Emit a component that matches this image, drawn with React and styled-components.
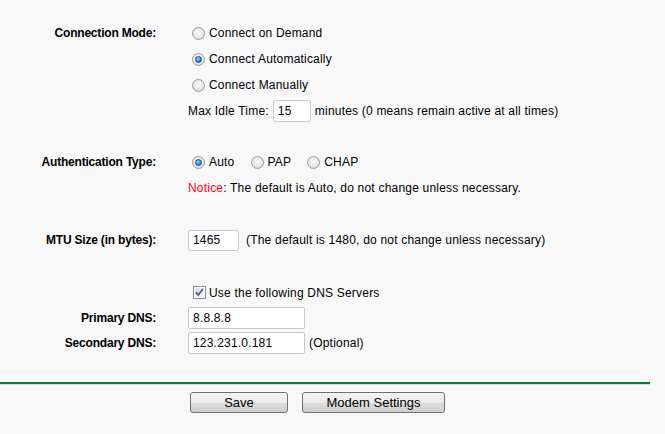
import React from 'react';
import styled, { createGlobalStyle } from 'styled-components';

const Global = createGlobalStyle`
  body {
    margin: 0;
    background: #f8f8f8;
    font-family: "Liberation Sans", Arial, sans-serif;
    font-size: 12px;
    color: #000;
  }
`;

const Page = styled.div`
  width: 650px;
  padding-top: 20px;
`;

const Section = styled.div`
  display: flex;
  flex-direction: column;
  margin-top: ${({ $space }) => $space || 0}px;
`;

const Row = styled.div`
  display: grid;
  grid-template-columns: 156px 1fr;
  column-gap: 32px;
  align-items: center;
  height: ${({ $h }) => $h || 26}px;
`;

const Label = styled.div`
  text-align: right;
  font-weight: bold;
  letter-spacing: -0.2px;
`;

const Value = styled.div`
  display: flex;
  align-items: center;
  white-space: nowrap;
  letter-spacing: 0.2px;
  gap: ${({ $gap }) => $gap || 0}px;
`;

const Choice = styled.label`
  display: inline-flex;
  align-items: center;
  gap: 4px;
  margin-left: 4px;
`;

const RadioDot = styled.span`
  position: relative;
  width: 13px;
  height: 13px;
  box-sizing: border-box;
  border-radius: 50%;
  border: 1px solid #9a9a9a;
  background: radial-gradient(circle at 50% 40%, #fbfbfb 0%, #e6e6e6 60%, #d0d0d0 100%);

  &::after {
    content: '';
    display: ${({ $on }) => ($on ? 'block' : 'none')};
    position: absolute;
    left: 2px;
    top: 2px;
    width: 7px;
    height: 7px;
    box-sizing: border-box;
    border-radius: 50%;
    border: 1px solid #1c4f7c;
    background: radial-gradient(circle at 40% 35%, #9fe0ff 0%, #2a8ad0 55%, #0c4f8a 100%);
  }
`;

const Field = styled.input`
  box-sizing: border-box;
  width: ${({ $w }) => $w}px;
  height: ${({ $hh }) => $hh || 22}px;
  padding: 0 4px;
  border: 1px solid #c8c8c8;
  border-radius: 2px;
  background: #fff;
  font-family: "Liberation Sans", Arial, sans-serif;
  font-size: 12px;
  letter-spacing: 0.2px;
  color: #000;
  outline: none;
`;

const Red = styled.span`
  color: #ff0022;
`;

const CheckWrap = styled.label`
  display: inline-flex;
  align-items: center;
  gap: 3px;
  margin-left: 5px;
`;

const Rule = styled.div`
  margin-top: 26px;
  border-top: 2px solid #0a7a3a;
  border-bottom: 1px solid #dcdcdc;
`;

const Buttons = styled.div`
  display: flex;
  gap: 14px;
  padding: 7px 0 0 190px;
`;

const Button = styled.button`
  box-sizing: border-box;
  width: ${({ $w }) => $w}px;
  height: 21px;
  padding: 0;
  border: 1px solid #707070;
  border-radius: 3px;
  background: linear-gradient(#f3f3f3 0%, #ebebeb 50%, #dddddd 51%, #cfcfcf 100%);
  font-family: "Liberation Sans", Arial, sans-serif;
  font-size: 13px;
  color: #000;
`;

const Radio = ({ on, children }) => (
  <Choice>
    <RadioDot $on={on} />
    {children}
  </Choice>
);

const CheckBox = () => (
  <svg width="13" height="13" viewBox="0 0 13 13">
    <defs>
      <linearGradient id="cb" x1="0" y1="0" x2="1" y2="1">
        <stop offset="0" stopColor="#dcdcdc" />
        <stop offset="1" stopColor="#f8f8f8" />
      </linearGradient>
    </defs>
    <rect x="0.5" y="0.5" width="12" height="12" fill="#fff" stroke="#8e8f8f" />
    <rect x="2" y="2" width="9" height="9" fill="url(#cb)" />
    <path d="M3 6.2 L5.2 9 L10 3" fill="none" stroke="#4a5fa8" strokeWidth="1.8" />
  </svg>
);

export default function App() {
  return (
    <Page>
      <Global />
      <Section>
        <Row>
          <Label>Connection Mode:</Label>
          <Value><Radio>Connect on Demand</Radio></Value>
        </Row>
        <Row>
          <div />
          <Value><Radio on>Connect Automatically</Radio></Value>
        </Row>
        <Row>
          <div />
          <Value><Radio>Connect Manually</Radio></Value>
        </Row>
        <Row $h={25}>
          <div />
          <Value $gap={4}>
            Max Idle Time:
            <Field $w={38} defaultValue="15" />
            minutes (0 means remain active at all times)
          </Value>
        </Row>
      </Section>

      <Section $space={26}>
        <Row>
          <Label>Authentication Type:</Label>
          <Value $gap={12}>
            <Radio on>Auto</Radio>
            <Radio>PAP</Radio>
            <Radio>CHAP</Radio>
          </Value>
        </Row>
        <Row>
          <div />
          <Value>
            <Red>Notice</Red>: The default is Auto, do not change unless necessary.
          </Value>
        </Row>
      </Section>

      <Section $space={26}>
        <Row>
          <Label>MTU Size (in bytes):</Label>
          <Value $gap={7}>
            <Field $w={51} $hh={21} defaultValue="1465" />
            (The default is 1480, do not change unless necessary)
          </Value>
        </Row>
      </Section>

      <Section $space={27}>
        <Row $h={25}>
          <div />
          <Value>
            <CheckWrap>
              <CheckBox />
              Use the following DNS Servers
            </CheckWrap>
          </Value>
        </Row>
        <Row $h={25}>
          <Label>Primary DNS:</Label>
          <Value>
            <Field $w={117} defaultValue="8.8.8.8" />
          </Value>
        </Row>
        <Row>
          <Label>Secondary DNS:</Label>
          <Value $gap={4}>
            <Field $w={117} defaultValue="123.231.0.181" />
            (Optional)
          </Value>
        </Row>
      </Section>

      <Rule />
      <Buttons>
        <Button $w={98}>Save</Button>
        <Button $w={143}>Modem Settings</Button>
      </Buttons>
    </Page>
  );
}
